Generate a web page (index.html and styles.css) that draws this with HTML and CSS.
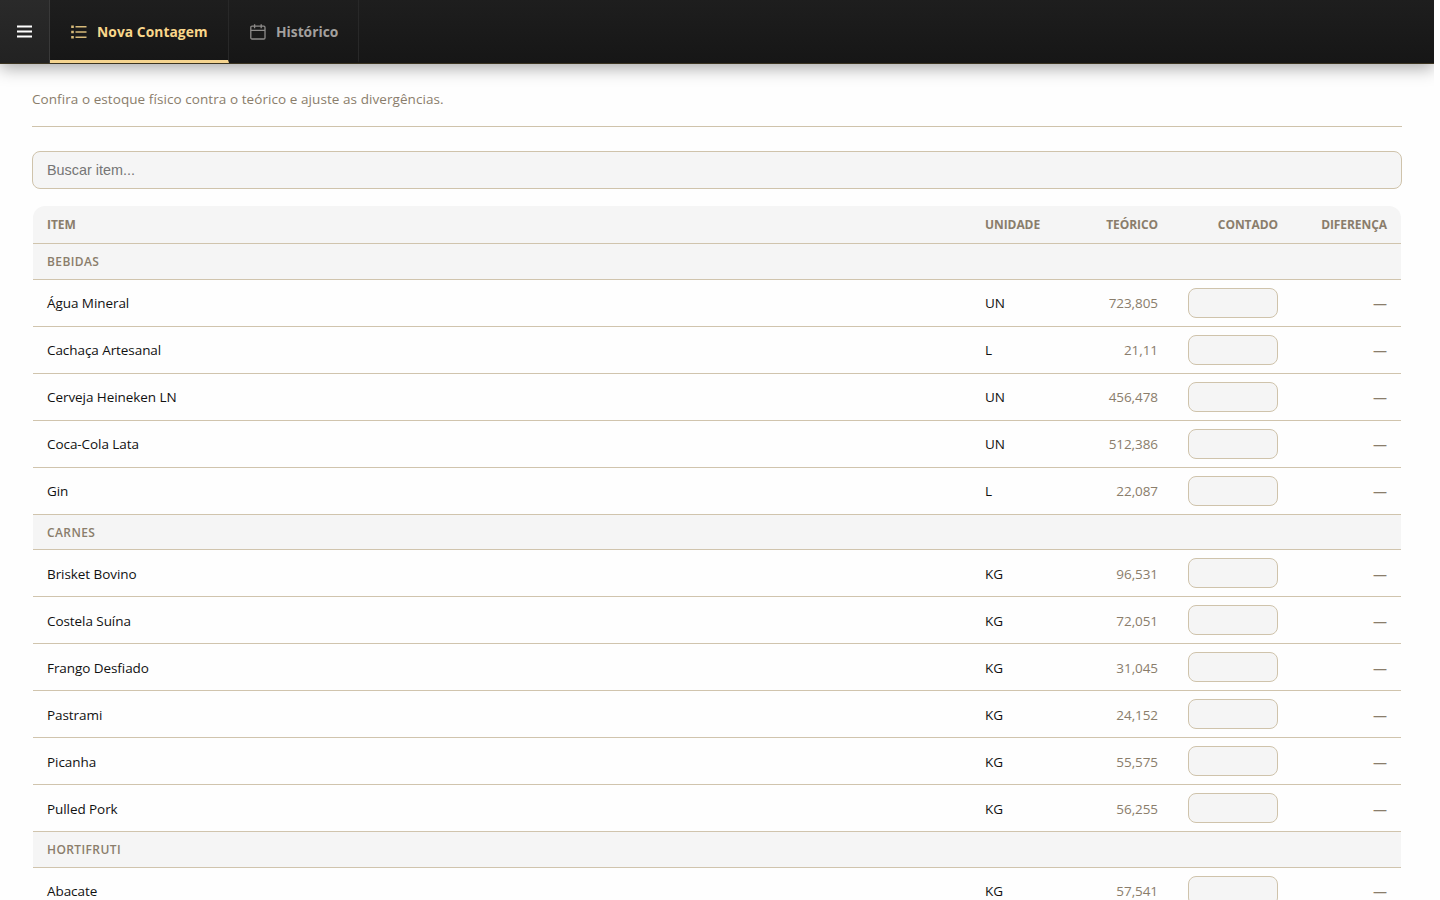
FILE: index.html
```html
<!DOCTYPE html>
<html lang="pt-BR">
<head>
    <meta charset="UTF-8">
    <meta name="viewport" content="width=device-width, initial-scale=1.0">
    <title>Nova Contagem</title>
    <link rel="stylesheet" href="styles.css">
</head>
<body>
    <header class="topbar">
        <button class="menu-btn" aria-label="Menu">
            <svg width="16" height="14" viewBox="0 0 16 14" stroke="#fff" stroke-width="2">
                <path d="M0 1.6h15M0 6.6h15M0 11.6h15"/>
            </svg>
        </button>
        <nav class="tabs">
            <a class="tab active" href="#">
                <svg width="16" height="16" viewBox="0 0 16 16" fill="none" stroke="currentColor" stroke-width="1.4">
                    <path d="M4.5 2.8h11M4.5 8h11M4.5 13.2h11"/>
                    <path d="M.2 2.8h2.6M.2 8h2.6M.2 13.2h2.6" stroke-width="2.4"/>
                </svg>
                <span>Nova Contagem</span>
            </a>
            <a class="tab" href="#">
                <svg width="16" height="16" viewBox="0 0 16 16" fill="none" stroke="currentColor" stroke-width="1.3">
                    <rect x=".8" y="2.2" width="14.2" height="12.8" rx="1.2"/>
                    <path d="M.8 6.4h14.2M4.6 .2v4M11.2 .2v4"/>
                </svg>
                <span>Histórico</span>
            </a>
        </nav>
    </header>

    <main class="page">
        <p class="subtitle">Confira o estoque físico contra o teórico e ajuste as divergências.</p>
        <input class="search" type="text" placeholder="Buscar item...">

        <table class="count-table">
            <colgroup>
                <col>
                <col class="col-unit">
                <col class="col-stock">
                <col class="col-count">
                <col class="col-diff">
            </colgroup>
            <thead>
                <tr><th>Item</th><th>Unidade</th><th class="num">Teórico</th><th class="num">Contado</th><th class="num">Diferença</th></tr>
            </thead>
            <tbody>
                <tr class="group"><td colspan="5">Bebidas</td></tr>
                <tr><td>Água Mineral</td><td>UN</td><td class="num stock">723,805</td><td class="num"><input class="qty" type="text"></td><td class="num diff">—</td></tr>
                <tr><td>Cachaça Artesanal</td><td>L</td><td class="num stock">21,11</td><td class="num"><input class="qty" type="text"></td><td class="num diff">—</td></tr>
                <tr><td>Cerveja Heineken LN</td><td>UN</td><td class="num stock">456,478</td><td class="num"><input class="qty" type="text"></td><td class="num diff">—</td></tr>
                <tr><td>Coca-Cola Lata</td><td>UN</td><td class="num stock">512,386</td><td class="num"><input class="qty" type="text"></td><td class="num diff">—</td></tr>
                <tr><td>Gin</td><td>L</td><td class="num stock">22,087</td><td class="num"><input class="qty" type="text"></td><td class="num diff">—</td></tr>
            </tbody>
            <tbody class="meats">
                <tr class="group"><td colspan="5">Carnes</td></tr>
                <tr><td>Brisket Bovino</td><td>KG</td><td class="num stock">96,531</td><td class="num"><input class="qty" type="text"></td><td class="num diff">—</td></tr>
                <tr><td>Costela Suína</td><td>KG</td><td class="num stock">72,051</td><td class="num"><input class="qty" type="text"></td><td class="num diff">—</td></tr>
                <tr><td>Frango Desfiado</td><td>KG</td><td class="num stock">31,045</td><td class="num"><input class="qty" type="text"></td><td class="num diff">—</td></tr>
                <tr><td>Pastrami</td><td>KG</td><td class="num stock">24,152</td><td class="num"><input class="qty" type="text"></td><td class="num diff">—</td></tr>
                <tr><td>Picanha</td><td>KG</td><td class="num stock">55,575</td><td class="num"><input class="qty" type="text"></td><td class="num diff">—</td></tr>
                <tr><td>Pulled Pork</td><td>KG</td><td class="num stock">56,255</td><td class="num"><input class="qty" type="text"></td><td class="num diff">—</td></tr>
            </tbody>
            <tbody>
                <tr class="group"><td colspan="5">Hortifruti</td></tr>
                <tr><td>Abacate</td><td>KG</td><td class="num stock">57,541</td><td class="num"><input class="qty" type="text"></td><td class="num diff">—</td></tr>
            </tbody>
        </table>
    </main>
</body>
</html>
```

FILE: styles.css
```css
* {
    box-sizing: border-box;
}
body {
    margin: 0;
    width: 1434px;
    height: 900px;
    overflow: hidden;
    background: #fefefe;
    color: #111;
    font-family: "Segoe UI", "Open Sans", "Noto Sans", sans-serif;
    font-size: 13.5px;
}
.topbar {
    display: flex;
    height: 64px;
    background: linear-gradient(#1e1e1e, #161616);
    border-bottom: 1px solid #3b3421;
    box-shadow: 0 4px 16px rgba(0, 0, 0, 0.35);
}
.menu-btn {
    display: flex;
    align-items: center;
    justify-content: center;
    width: 50px;
    padding: 0;
    border: none;
    border-right: 1px solid #393939;
    background: linear-gradient(#2a2a2a, #222);
}
.tabs {
    display: flex;
}
.tab {
    display: flex;
    align-items: center;
    gap: 10px;
    padding: 3px 20px 0 21px;
    border-right: 1px solid #282828;
    border-bottom: 3px solid transparent;
    color: #a3a09e;
    font-size: 13.8px;
    font-weight: 700;
    text-decoration: none;
}
.tab.active {
    width: 179px;
    color: #f9d78b;
    border-bottom-color: #f5d48f;
    letter-spacing: 0.06px;
}
.tab svg {
    flex-shrink: 0;
    opacity: 0.85;
}
.page {
    padding: 24px 32px 0;
}
.subtitle {
    margin: 0 0 24px;
    height: 39px;
    line-height: 22px;
    border-bottom: 1px solid #cfc3ab;
    color: #8a7d6b;
    letter-spacing: 0.07px;
}
.search {
    display: block;
    width: 100%;
    height: 38px;
    padding: 0 14px;
    border: 1px solid #cfc3ab;
    border-radius: 8px;
    background: #f5f5f5;
    font-family: Arial, "Liberation Sans", sans-serif;
    font-size: 14.4px;
}
.search::placeholder {
    color: #757575;
}
.count-table {
    width: 1368px;
    margin: 17px 1px 0;
    border-collapse: separate;
    border-spacing: 0;
    border-radius: 12px 12px 0 0;
    overflow: hidden;
    table-layout: fixed;
}
.col-unit {
    width: 100px;
}
.col-stock {
    width: 101px;
}
.col-count {
    width: 120px;
}
.col-diff {
    width: 109px;
}
th,
td {
    height: 47px;
    padding: 0 14px;
    border-bottom: 1px solid #d0c4ad;
    text-align: left;
    white-space: nowrap;
    letter-spacing: -0.07px;
}
th {
    height: 38px;
    background: #f5f5f5;
    color: #8a7d6b;
    font-size: 12px;
    text-transform: uppercase;
}
.group td {
    height: 36px;
    background: #f5f5f5;
    color: #8a7d6b;
    font-size: 12px;
    font-weight: 600;
    letter-spacing: 0.4px;
    text-transform: uppercase;
}
.meats td {
    padding-top: 1px;
}
.meats .qty {
    margin-top: -1px;
}
.meats .group td {
    height: 35px;
    padding-top: 0;
}
.num {
    text-align: right;
}
.stock,
.diff {
    color: #8a7d6b;
}
.diff {
    font-size: 14px;
}
.meats .diff {
    padding-top: 2px;
}
.qty {
    display: block;
    width: 90px;
    height: 30px;
    margin-left: auto;
    border: 1px solid #cfc3ab;
    border-radius: 8px;
    background: #f5f5f5;
}
```
